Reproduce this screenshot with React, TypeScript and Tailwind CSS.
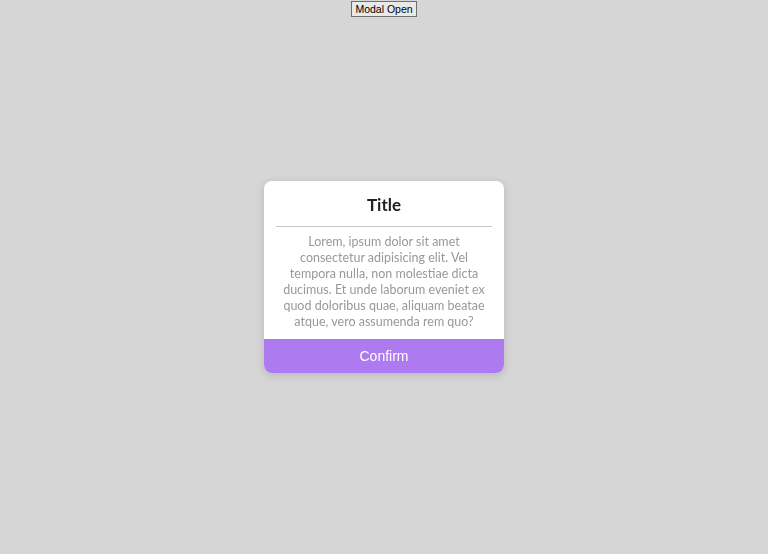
import { useState } from "react";

export default function App() {
  const [open, setOpen] = useState(true);

  return (
    <div className="min-h-screen w-full bg-[#d6d6d6] flex flex-col items-center">
      <button
        onClick={() => setOpen(true)}
        className="mt-px h-[16px] px-[3px] bg-[#e9e9e9] border border-[#6f6f6f] text-[10.5px] leading-none text-black font-['Liberation_Sans',Arial,sans-serif]"
      >
        Modal Open
      </button>

      {open && (
        <div className="fixed inset-0 flex items-center justify-center">
          <div className="w-[240px] h-[192px] bg-white rounded-[8px] overflow-hidden shadow-[0_2px_8px_rgba(0,0,0,0.15)] flex flex-col">
            <div className="px-3 flex-1 flex flex-col">
              <h2 className="pt-[13px] pb-[10px] text-center text-[17px] leading-[22px] font-bold text-[#222] font-['Lato',sans-serif] border-b border-[#c8c8c8]">
                Title
              </h2>
              <p className="pt-[7px] px-[4px] text-center text-[12.5px] leading-[16px] text-[#999] font-['Lato',sans-serif]">
                Lorem, ipsum dolor sit amet consectetur adipisicing elit. Vel
                tempora nulla, non molestiae dicta ducimus. Et unde laborum
                eveniet ex quod doloribus quae, aliquam beatae atque, vero
                assumenda rem quo?
              </p>
            </div>
            <button
              onClick={() => setOpen(false)}
              className="h-[34px] w-full bg-[#ad7bef] text-white text-[14px] font-['Liberation_Sans',Arial,sans-serif]"
            >
              Confirm
            </button>
          </div>
        </div>
      )}
    </div>
  );
}
